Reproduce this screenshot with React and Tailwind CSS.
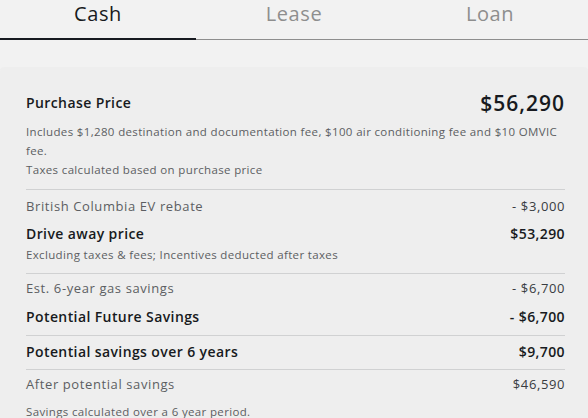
import React from 'react'

const font = { fontFamily: '"Open Sans", "Liberation Sans", sans-serif' }

const small = 'text-[11.5px] tracking-[0.35px] text-[#5c5e62] leading-[19px]'

function Row({ label, value, strong, sub }) {
  return (
    <div>
      <div className="flex justify-between items-center leading-[20px]">
        <span className={strong ? 'text-[14px] font-semibold tracking-[0.4px] text-[#171a20]' : 'text-[13px] tracking-[0.6px] text-[#5c5e62]'}>{label}</span>
        <span className={strong ? 'text-[14px] font-semibold tracking-[0.4px] text-[#171a20]' : 'text-[13px] tracking-[0.6px] text-[#393c41]'}>{value}</span>
      </div>
      {sub && <p className={small + ' mt-[1px]'}>{sub}</p>}
    </div>
  )
}

export default function App() {
  return (
    <div className="w-[588px] h-[418px] overflow-hidden bg-[#f2f2f2]" style={font}>
      <div className="flex h-[40px] text-[20px] leading-[28px] tracking-[0.6px] font-medium">
        <div className="flex-1 flex items-start justify-center border-b-2 border-[#171a20] text-[#171a20]">Cash</div>
        <div className="flex-1 flex items-start justify-center border-b border-[#8e8e8e] text-[#8e8e8e] pb-px">Lease</div>
        <div className="flex-1 flex items-start justify-center border-b border-[#8e8e8e] text-[#8e8e8e] pb-px">Loan</div>
      </div>

      <div className="mt-[27px] bg-[#eeeeee] rounded-[4px] pl-[26px] pr-[23px] pt-[22px]">
        <div className="flex justify-between items-center leading-[28px]">
          <span className="text-[14px] font-semibold tracking-[0.4px] text-[#171a20]">Purchase Price</span>
          <span className="text-[21px] font-semibold tracking-[1px] text-[#171a20]">$56,290</span>
        </div>
        <p className={small + ' mt-[5px]'}>
          Includes $1,280 destination and documentation fee, $100 air conditioning fee and $10 OMVIC fee.
        </p>
        <p className={small}>Taxes calculated based on purchase price</p>

        <div className="border-t border-[#d0d1d2] mt-[10px] pt-[6px] flex flex-col gap-[8px] pb-[9px]">
          <Row label="British Columbia EV rebate" value="- $3,000" />
          <Row label="Drive away price" value="$53,290" strong sub="Excluding taxes & fees; Incentives deducted after taxes" />
        </div>

        <div className="border-t border-[#d0d1d2] pt-[4px] flex flex-col gap-[9px] pb-[8px]">
          <Row label="Est. 6-year gas savings" value="- $6,700" />
          <Row label="Potential Future Savings" value="- $6,700" strong />
        </div>

        <div className="border-t border-[#d0d1d2] pt-[6px] pb-[7px]">
          <Row label="Potential savings over 6 years" value="$9,700" strong />
        </div>

        <div className="border-t border-[#d0d1d2] pt-[4px]">
          <Row label="After potential savings" value="$46,590" />
          <p className={small + ' mt-[8px]'}>Savings calculated over a 6 year period.</p>
        </div>
      </div>
    </div>
  )
}
